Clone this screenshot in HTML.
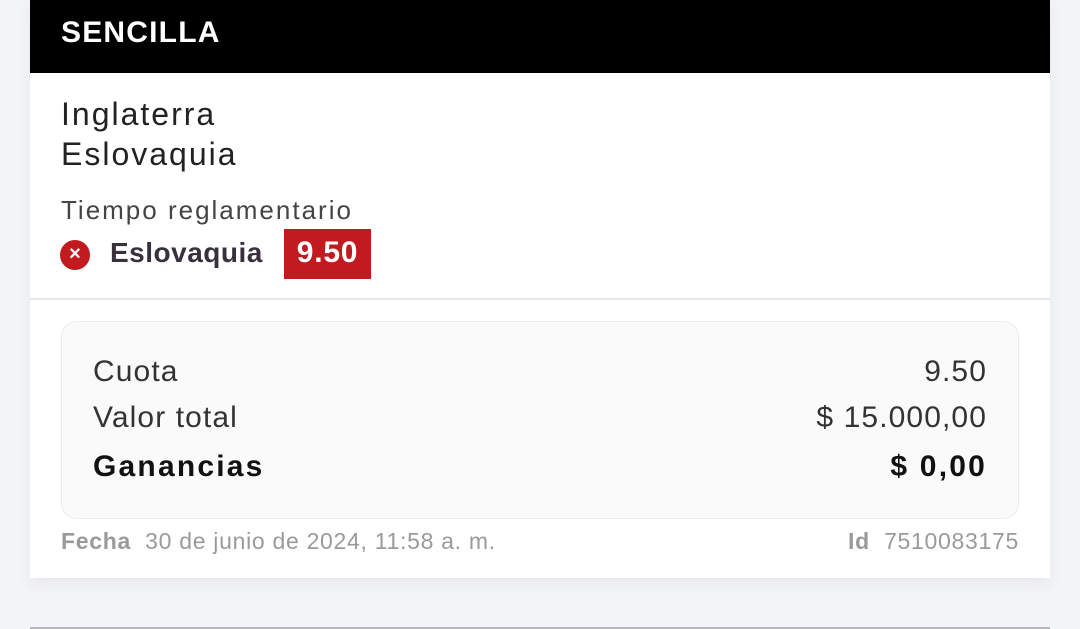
<!DOCTYPE html>
<html><head><style>
body{margin:0;width:1080px;height:629px;background:#f3f4f8;font-family:"Liberation Sans",sans-serif;position:relative;overflow:hidden}
.card{position:absolute;left:30px;top:0;width:1020px;height:578px;background:#fff;box-shadow:0 6px 14px rgba(0,0,0,0.05)}
.hdr{height:73px;background:#000;color:#fff;font-weight:bold;font-size:30px;line-height:66px;padding-left:31px;letter-spacing:1.2px}
.t{position:absolute;left:31px;color:#222;font-size:32px;letter-spacing:2px}
.sep{position:absolute;left:0;right:0;top:298px;height:2px;background:#e6e6e6}
.box{position:absolute;left:31px;top:321px;width:956px;height:196px;background:#fafafa;border:1px solid #ebebeb;border-radius:16px}
.row{position:absolute;left:31px;right:31px;font-size:30px;color:#333;display:flex;justify-content:space-between;letter-spacing:1.1px}
.foot{position:absolute;top:528px;font-size:23px;color:#9a9a9a;letter-spacing:0.7px}
</style></head><body>
<div class="card">
<div class="hdr">SENCILLA</div>
<div class="t" style="top:96px">Inglaterra</div>
<div class="t" style="top:136px">Eslovaquia</div>
<div class="t" style="top:195px;font-size:26px;color:#444">Tiempo reglamentario</div>
<div style="position:absolute;left:30px;top:240px;width:30px;height:30px;border-radius:50%;background:#c21b1f;color:#fff;font-size:20px;font-weight:bold;text-align:center;line-height:29px">×</div>
<div style="position:absolute;left:80px;top:237px;font-size:28px;font-weight:bold;color:#3a2f3d;letter-spacing:0.5px">Eslovaquia</div>
<div style="position:absolute;left:254px;top:229px;width:87px;height:50px;background:#c21b1f;color:#fff;font-weight:bold;font-size:30px;text-align:center;line-height:48px;letter-spacing:0.8px">9.50</div>
<div class="sep"></div>
<div class="box">
<div class="row" style="top:33px"><span>Cuota</span><span>9.50</span></div>
<div class="row" style="top:79px"><span>Valor total</span><span>$ 15.000,00</span></div>
<div class="row" style="top:128px;font-weight:bold;color:#111;letter-spacing:2.2px"><span>Ganancias</span><span>$ 0,00</span></div>
</div>
<div class="foot" style="left:31px"><b>Fecha</b>&nbsp; 30 de junio de 2024, 11:58 a. m.</div>
<div class="foot" style="right:31px"><b>Id</b>&nbsp; 7510083175</div>
</div>
<div style="position:absolute;left:30px;width:1020px;top:627px;height:2px;background:#b5b5b5"></div>
</body></html>
